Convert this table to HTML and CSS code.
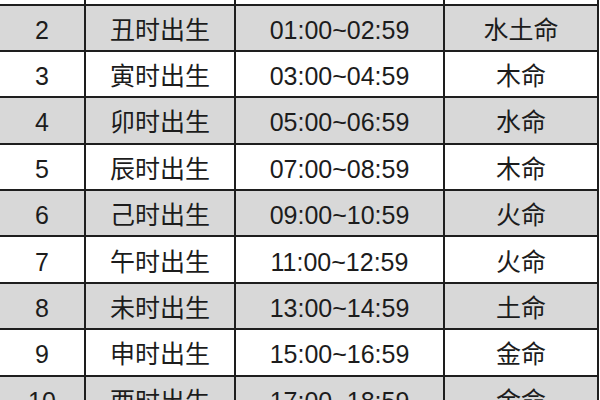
FILE: index.html
```html
<!DOCTYPE html>
<html lang="zh-CN">
<head>
<meta charset="utf-8">
<title>十二时辰五行命表</title>
<link rel="stylesheet" href="styles.css">
</head>
<body>
<div class="viewport">
  <div class="sheet">
    <div class="row edge">
      <div class="cell"></div><div class="cell"></div><div class="cell"></div><div class="cell"></div>
    </div>
    <div class="row shade">
      <div class="cell">2</div><div class="cell">丑时出生</div><div class="cell">01:00~02:59</div><div class="cell">水土命</div>
    </div>
    <div class="row">
      <div class="cell">3</div><div class="cell">寅时出生</div><div class="cell">03:00~04:59</div><div class="cell">木命</div>
    </div>
    <div class="row shade">
      <div class="cell">4</div><div class="cell">卯时出生</div><div class="cell">05:00~06:59</div><div class="cell">水命</div>
    </div>
    <div class="row">
      <div class="cell">5</div><div class="cell">辰时出生</div><div class="cell">07:00~08:59</div><div class="cell">木命</div>
    </div>
    <div class="row shade">
      <div class="cell">6</div><div class="cell">己时出生</div><div class="cell">09:00~10:59</div><div class="cell">火命</div>
    </div>
    <div class="row">
      <div class="cell">7</div><div class="cell">午时出生</div><div class="cell">11:00~12:59</div><div class="cell">火命</div>
    </div>
    <div class="row shade">
      <div class="cell">8</div><div class="cell">未时出生</div><div class="cell">13:00~14:59</div><div class="cell">土命</div>
    </div>
    <div class="row">
      <div class="cell">9</div><div class="cell">申时出生</div><div class="cell">15:00~16:59</div><div class="cell">金命</div>
    </div>
    <div class="row shade">
      <div class="cell">10</div><div class="cell">酉时出生</div><div class="cell">17:00~18:59</div><div class="cell">金命</div>
    </div>
  </div>
</div>
</body>
</html>
```

FILE: styles.css
```css
html, body {
  margin: 0;
  padding: 0;
  background: #ffffff;
}

.viewport {
  width: 600px;
  height: 400px;
  overflow: hidden;
}

.sheet {
  display: grid;
  grid-template-columns: 86px 150px 209px 154px;
  grid-template-rows: 5.5px;
  grid-auto-rows: 46.375px;
  width: 599px;
  font-family: "Liberation Sans", "Noto Sans CJK SC", sans-serif;
  font-size: 25px;
  color: #1c1c1c;
}

.row {
  display: contents;
}

.cell {
  box-sizing: border-box;
  display: flex;
  align-items: center;
  justify-content: center;
  border-right: 2px solid #1e1e1e;
  border-bottom: 2px solid #1e1e1e;
  padding-top: 5px;
  line-height: 1;
  background: #ffffff;
  white-space: nowrap;
}

.edge .cell {
  padding: 0;
}

.shade .cell {
  background: #d8d8d8;
}
```
